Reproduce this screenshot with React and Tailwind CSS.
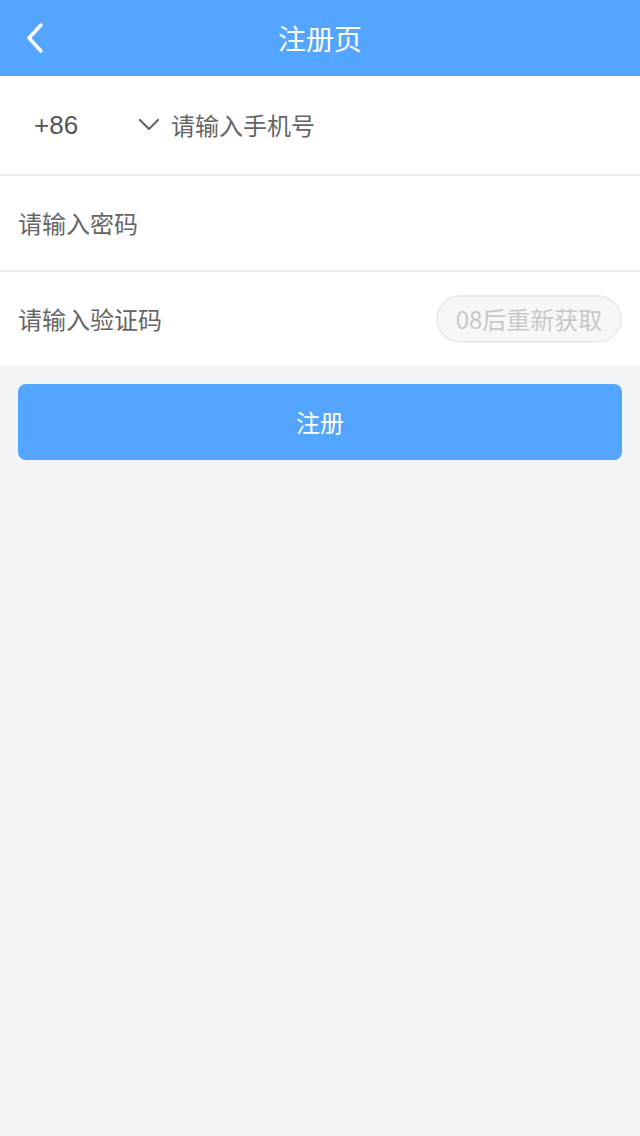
import React from 'react';

const BackIcon = () => (
    <svg width="20" height="32" viewBox="0 0 20 32" fill="none">
        <path d="M16 3 L4 16 L16 29" stroke="white" strokeWidth="3.5" strokeLinecap="round" strokeLinejoin="round" />
    </svg>
);

const ChevronDown = () => (
    <svg width="24" height="16" viewBox="0 0 24 16" fill="none">
        <path d="M3 3 L12 12 L21 3" stroke="#666" strokeWidth="2.2" strokeLinecap="round" strokeLinejoin="round" />
    </svg>
);

export default function App() {
    return (
        <div className="min-h-[1136px] w-full bg-[#f3f4f8] font-['Noto_Sans_CJK_SC',sans-serif]">
            <div className="h-[76px] bg-[#53a5ff] flex items-center relative">
                <div className="pl-[25px] flex items-center">
                    <BackIcon />
                </div>
                <h1 className="absolute inset-x-0 text-center text-[28px] text-white pointer-events-none">注册页</h1>
            </div>

            <div className="bg-white">
                <div className="h-[100px] flex items-center border-b-2 border-[#ebebeb]">
                    <span className="pl-[34px] w-[137px] text-[26px] text-[#555] font-['Liberation_Sans',sans-serif]">+86</span>
                    <ChevronDown />
                    <span className="ml-[10px] text-[24px] text-[#666]">请输入手机号</span>
                </div>
                <div className="h-[96px] flex items-center border-b-2 border-[#ebebeb] px-[18px]">
                    <span className="text-[24px] text-[#666]">请输入密码</span>
                </div>
                <div className="h-[94px] flex items-center justify-between px-[18px]">
                    <span className="text-[24px] text-[#666]">请输入验证码</span>
                    <div className="w-[186px] h-[48px] rounded-full border-2 border-[#ececec] bg-[#f7f7f7] flex items-center justify-center text-[24px] text-[#c8c8c8]">
                        08后重新获取
                    </div>
                </div>
            </div>

            <div className="px-[18px] pt-[18px]">
                <button className="w-full h-[76px] rounded-[8px] bg-[#53a5ff] text-white text-[24px]">注册</button>
            </div>
        </div>
    );
}
